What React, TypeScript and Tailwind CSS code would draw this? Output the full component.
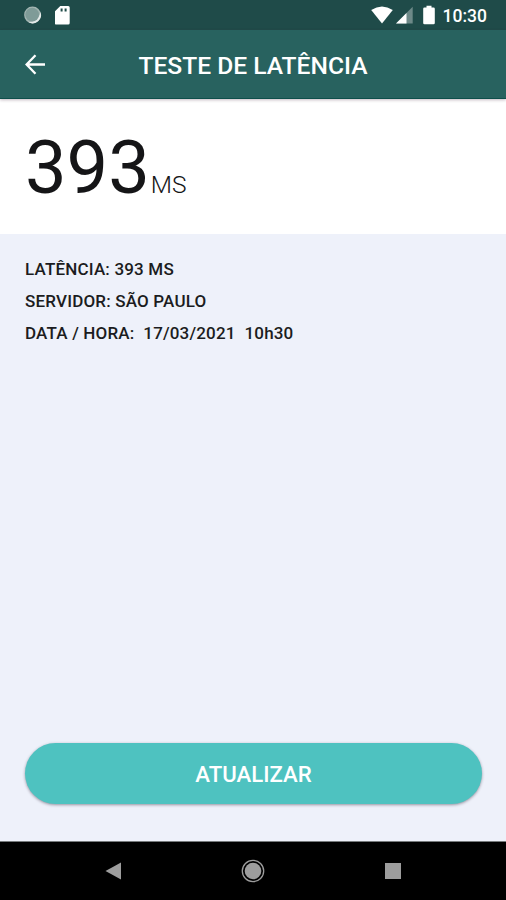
interface DetailRow {
  id: string;
  text: string;
}

const details: DetailRow[] = [
  { id: "latency", text: "LATÊNCIA: 393 MS" },
  { id: "server", text: "SERVIDOR: SÃO PAULO" },
  { id: "date", text: "DATA / HORA:  17/03/2021  10h30" },
];

function StatusBar() {
  return (
    <div className="flex h-[30px] items-center bg-[#1f4b49] text-white">
      <svg className="ml-6 h-[18px] w-[18px]" viewBox="0 0 18 18">
        <circle cx="8.5" cy="9" r="8.4" fill="#a3b5b2" />
        <path d="M16.5 6a8.4 8.4 0 0 1-12.6 9.8C9 17 15.5 12.5 16.5 6Z" fill="#e4eae9" />
        <circle cx="8.2" cy="8.6" r="6.9" fill="#7f9b98" />
      </svg>
      <svg className="ml-[13px] h-5 w-[15px]" viewBox="0 0 15 20" fill="currentColor">
        <path d="M5.3 1H13.2A1.5 1.5 0 0 1 14.7 2.5V18A1.5 1.5 0 0 1 13.2 19.5H1.3A1.5 1.5 0 0 1-.2 18V6.5Z" />
        <path d="M5.6 3.4h2v3h-2ZM9.6 3.4h2v3h-2Z" fill="#1f4b49" />
      </svg>
      <svg className="ml-auto h-[18px] w-[22px]" viewBox="0 0 22 18" fill="currentColor">
        <path d="M11 17.5.2 4Q11-3 21.8 4Z" />
      </svg>
      <svg className="ml-[3px] h-[18px] w-[17px]" viewBox="0 0 17 18" fill="currentColor">
        <path d="M16.7.8V17.5H0Z" opacity=".35" />
        <path d="M10.5 7V17.5H0Z" />
      </svg>
      <svg className="ml-2.5 h-5 w-3" viewBox="0 0 12 20" fill="currentColor">
        <path d="M3.5.8h5V2.5h2A1.3 1.3 0 0 1 11.8 3.8V18A1.3 1.3 0 0 1 10.5 19.3H1.5A1.3 1.3 0 0 1 .2 18V3.8A1.3 1.3 0 0 1 1.5 2.5h2Z" />
      </svg>
      <span className="mt-0.5 mr-[19px] ml-2 text-[17.5px] leading-5 font-medium">
        10:30
      </span>
    </div>
  );
}

function Header() {
  return (
    <header className="relative flex h-[69px] items-center justify-center border-b border-[#0e4f4b] bg-[#28625f] text-white shadow-[0_1px_3px_rgba(60,20,50,0.3)]">
      <button className="absolute top-[24px] left-[25px]" aria-label="Voltar">
        <svg className="h-[21px] w-[21px]" viewBox="0 0 21 21" fill="none" stroke="currentColor" strokeWidth="2.3">
          <path d="M20 10.5H2M10.5 1.2 1.6 10.5l8.900 9.300" />
        </svg>
      </button>
      <h1 className="mt-1 text-[24.6px] leading-8 font-medium">
        TESTE DE LATÊNCIA
      </h1>
    </header>
  );
}

function NavigationBar() {
  return (
    <nav className="flex h-[59px] items-center justify-between border-t border-[#777b7d] bg-black px-[105px] text-[#9d9d9d]">
      <svg className="h-[18px] w-[17px]" viewBox="0 0 17 18" fill="currentColor">
        <path d="M.5 9 16 .5v17Z" />
      </svg>
      <svg className="mr-0.5 h-6 w-6" viewBox="0 0 24 24">
        <circle cx="12" cy="12" r="10.7" fill="none" stroke="currentColor" strokeWidth="1.3" />
        <circle cx="12" cy="12" r="8.3" fill="currentColor" />
      </svg>
      <svg className="h-4 w-4" viewBox="0 0 16 16" fill="currentColor">
        <path d="M0 0h16v16H0Z" />
      </svg>
    </nav>
  );
}

export default function App() {
  return (
    <div className="flex h-screen w-full flex-col bg-[#eef1fa] font-['Roboto',sans-serif]">
      <StatusBar />
      <Header />

      {/* Result */}
      <section className="flex h-[135px] items-baseline bg-white pt-[31px] pl-[25px] text-[#151517]">
        <span className="text-[74px] leading-[76px]">393</span>
        <span className="ml-px text-[24.5px] font-light">MS</span>
      </section>

      {/* Details */}
      <section className="flex flex-1 flex-col px-[25px] pt-[19px]">
        {details.map((row) => (
          <p
            key={row.id}
            className="text-[17px] leading-8 font-medium tracking-[0.18px] whitespace-pre text-[#1b1c20]"
          >
            {row.text}
          </p>
        ))}
        <button className="mt-auto -mr-px mb-[37px] h-[61px] rounded-full bg-[#4ec2c0] pt-0.5 text-[22.2px] font-medium text-white shadow-[0_1px_3px_rgba(40,30,50,0.45)]">
          ATUALIZAR
        </button>
      </section>

      <NavigationBar />
    </div>
  );
}
